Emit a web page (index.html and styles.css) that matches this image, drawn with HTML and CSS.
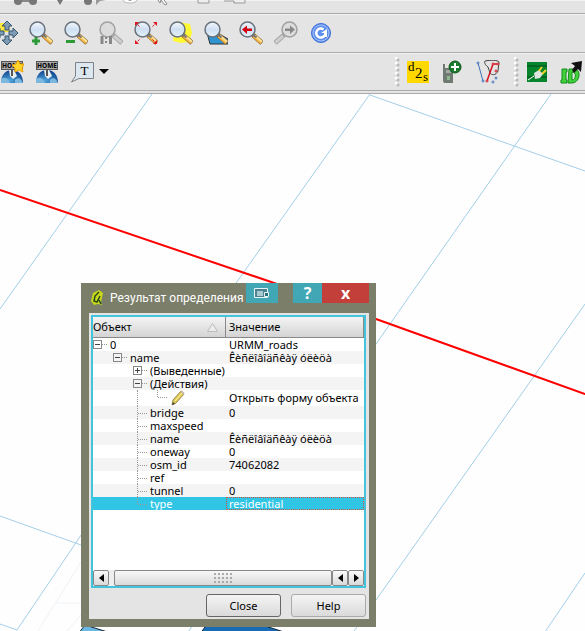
FILE: index.html
```
<!DOCTYPE html>
<html lang="ru">
<head>
<meta charset="utf-8">
<title>Результат определения</title>
<link rel="stylesheet" href="styles.css">
</head>
<body>
<svg class="defs" width="0" height="0" aria-hidden="true">
  <defs>
    <linearGradient id="handle" x1="0" y1="1" x2="1" y2="0">
      <stop offset="0.3" stop-color="#e79a1f"/>
      <stop offset="0.6" stop-color="#ffe9a0"/>
      <stop offset="1" stop-color="#d98a10"/>
    </linearGradient>
    <linearGradient id="glass" x1="0" y1="0" x2="0" y2="1">
      <stop offset="0" stop-color="#f4f8fc"/>
      <stop offset="0.5" stop-color="#cfe0f2"/>
      <stop offset="1" stop-color="#e6f2fb"/>
    </linearGradient>
    <radialGradient id="globe" cx="0.4" cy="0.8" r="0.8">
      <stop offset="0" stop-color="#4fa6dd"/>
      <stop offset="1" stop-color="#0b3c86"/>
    </radialGradient>
    <symbol id="lens" viewBox="0 0 24 24">
      <path d="M14 14l9 8" stroke="#8a6a3a" stroke-width="5"/>
      <path d="M15 15l7.500 6.500" stroke="url(#handle)" stroke-width="4"/>
      <path d="M14.500 14l3 2.500" stroke="#777" stroke-width="2"/>
      <circle cx="8.500" cy="8.500" r="7.500" fill="url(#glass)" stroke="#69717b" stroke-width="1.500"/>
    </symbol>
    <symbol id="lens-off" viewBox="0 0 24 24">
      <path d="M14 14l9 8" stroke="#a2a2a2" stroke-width="5"/>
      <path d="M15 15l7.500 6.500" stroke="#cecece" stroke-width="3"/>
      <circle cx="8.500" cy="8.500" r="7.500" fill="#dcdcdc" stroke="#a0a0a0" stroke-width="1.500"/>
    </symbol>
    <symbol id="home" viewBox="0 0 24 24">
      <path d="M1 23c0-9 5-13 11-13s11 4 11 13z" fill="url(#globe)"/>
      <path d="M9 10l5 0 3 6-4 3-3-3z" fill="#e9eef2"/>
      <path d="M1 19c4-3 8 0 9 4H1zM15 20c3-3 6-2 8 3h-8z" fill="#7cb7df"/>
      <path d="M12 8v8" stroke="#555" stroke-width="2"/>
      <rect x="1.500" y="1.500" width="21" height="8" fill="#a9a9a9" stroke="#555"/>
      <text x="12" y="8" font-size="6.500" font-weight="bold" text-anchor="middle">HOME</text>
    </symbol>
  </defs>
</svg>

<div class="app">
  <!-- верхняя панель, видна только нижняя часть -->
  <div class="toolbar toolbar-top">
    <svg width="250" height="12" viewBox="0 0 250 12">
      <path d="M17 0h16v2H17z" fill="#888"/>
      <circle cx="18" cy="1" r="4" fill="#777"/>
      <circle cx="33" cy="1" r="4" fill="#777"/>
      <path d="M57 0h6l-3 5z" fill="#777"/>
      <circle cx="88" cy="1" r="4" fill="#777"/>
      <path d="M96 0h10l-6 1-4 4z" fill="#999"/>
      <ellipse cx="130" cy="0" rx="7" ry="3" fill="#fff" stroke="#bbb"/>
      <circle cx="130" cy="-1" r="2" fill="#999"/>
      <path d="M158 0l2 3 1-3 4 5 2-1-3-4" fill="#fff" stroke="#888"/>
      <path d="M198 0v3h11V0M224 1h10v2h11V0" fill="#eee" stroke="#999"/>
    </svg>
  </div>

  <div class="toolbar">
    <button class="tool tool-first" aria-label="Прокрутка"><svg viewBox="0 0 24 24">
      <path d="M4 2h12l-1 9H4z" fill="#ffe83c"/>
      <path d="M13 0l5 5h-3v4h-4V5H8zM13 24l5-5h-3v-4h-4v4H8zM1 12l5-5v3h4v4H6v3zM24 12l-5-5v3h-4v4h4v3z" fill="#7e9cb5" stroke="#35556f"/>
    </svg></button>
    <button class="tool" aria-label="Увеличить"><svg viewBox="0 0 24 24">
      <use href="#lens"/><path d="M7 16v8M3 20h8" stroke="#2c9b37" stroke-width="3"/>
    </svg></button>
    <button class="tool" aria-label="Уменьшить"><svg viewBox="0 0 24 24">
      <use href="#lens"/><path d="M2 20.500h9" stroke="#2c9b37" stroke-width="3"/>
    </svg></button>
    <button class="tool" aria-label="Фактический размер" disabled><svg viewBox="0 0 24 24">
      <use href="#lens-off"/><path d="M3 15v8M11.500 15v8" stroke="#888" stroke-width="3"/><path d="M7 16v2M7 20v2" stroke="#888" stroke-width="2"/>
    </svg></button>
    <button class="tool" aria-label="Полный охват"><svg viewBox="0 0 24 24">
      <use href="#lens"/><path d="M1 1h4L1 5zM23 1h-4l4 4zM1 23h4l-4-4zM23 23h-4l4-4z" fill="#e0141e"/><path d="M2 2l4 4M22 2l-4 4M2 22l4-4M22 22l-4-4" stroke="#e0141e" stroke-dasharray="2 1"/>
    </svg></button>
    <button class="tool" aria-label="Увеличить до выделения"><svg viewBox="0 0 24 24">
      <path d="M10 1l11 2 2 9-3 9-8 1-8-2 1-8z" fill="#fff836"/><use href="#lens"/>
    </svg></button>
    <button class="tool" aria-label="Увеличить до слоя"><svg viewBox="0 0 24 24">
      <path d="M2 8l4 15h18v-5L12 11z" fill="#2e94d2" stroke="#333"/><use href="#lens"/>
    </svg></button>
    <button class="tool" aria-label="Предыдущий охват"><svg viewBox="0 0 24 24">
      <use href="#lens"/><path d="M3 8.500l5-4v3h5v2.500H8v3z" fill="#d3000b"/>
    </svg></button>
    <button class="tool" aria-label="Следующий охват" disabled><svg viewBox="0 0 24 24">
      <g transform="translate(24 0) scale(-1 1)"><use href="#lens-off"/></g><path d="M21 8.500l-5-4v3h-5v2.500h5v3z" fill="#888"/>
    </svg></button>
    <button class="tool" aria-label="Обновить"><svg viewBox="0 0 24 24">
      <circle cx="12" cy="12" r="9.500" fill="#5f90ee" stroke="#3c6bd4"/>
      <circle cx="12" cy="12" r="8" fill="none" stroke="#a6c2fa"/>
      <path d="M14.500 8.500a4.500 4.500 0 1 0 1 6" fill="none" stroke="#fff" stroke-width="2.500"/><path d="M12 12l6-4v8h-3v-4z" fill="#fff"/>
    </svg></button>
  </div>

  <div class="toolbar toolbar-last">
    <button class="tool" aria-label="Новая закладка"><svg viewBox="0 0 24 24">
      <use href="#home"/><path d="M18 0l2 4 4 0-2 4 1 4-4-2-4 2 0-4-3-3 4-1z" fill="#ffd42a" stroke="#f0a000"/>
    </svg></button>
    <button class="tool" aria-label="Закладки"><svg viewBox="0 0 24 24"><use href="#home"/></svg></button>
    <button class="tool" aria-label="Аннотация"><svg viewBox="0 0 24 24">
      <path d="M5.500 2.500h18v16H9L1.500 22l4-6z" fill="#dce7f0" stroke="#7c8287"/>
      <text class="serif" x="14.500" y="15" font-size="13" text-anchor="middle">T</text>
    </svg></button>
    <button class="tool tool-arrow" aria-label="Ещё"><svg viewBox="0 0 10 24"><path d="M0 9h10l-5 5z"/></svg></button>

    <div class="plugins">
      <span class="grip"></span>
      <button class="tool" aria-label="d2s"><svg viewBox="0 0 24 24">
        <path d="M1 1h22v22H1z" fill="#ffd800"/>
        <text class="serif" x="2" y="11" font-size="13">d</text><text class="serif" x="9" y="18" font-size="15">2</text><text class="serif" x="17" y="21" font-size="13">s</text>
      </svg></button>
      <button class="tool" aria-label="GPS"><svg viewBox="0 0 24 24">
        <path d="M2 4h2v4h8v15H3L2 21z" fill="#6f7b72"/>
        <path d="M5 10h5v3H5z" fill="#a3ada3"/><path d="M6 16h3v4H6z" fill="#8fb88f"/>
        <circle cx="14" cy="7" r="6" fill="#187a2c" stroke="#105a1f"/>
        <path d="M14 3v8M10 7h8" stroke="#fff" stroke-width="2"/>
      </svg></button>
      <button class="tool" aria-label="Оцифровка"><svg viewBox="0 0 24 24" fill="none">
        <path d="M9 1c5-1 13-1 14 1l-1 9c-2 5-7 4-8 2l-2-6C9 5 8 2 9 1z" stroke="#444"/>
        <path d="M2 3l5 18" stroke="#3b70b8"/><path d="M11 21l6-17h5" stroke="#d31420" stroke-width="1.500"/>
        <g fill="#fff" stroke="#3b70b8"><circle cx="2" cy="3" r="1"/><circle cx="7" cy="21" r="1"/><circle cx="20" cy="18" r="1"/><circle cx="17" cy="22" r="1"/></g>
        <g fill="#fff" stroke="#d31420"><circle cx="11" cy="21" r="1"/><circle cx="17" cy="4" r="1"/><circle cx="22" cy="4" r="1"/><circle cx="20" cy="11" r="1"/></g>
      </svg></button>
      <span class="grip"></span>
      <button class="tool" aria-label="Соединение"><svg viewBox="0 0 24 24">
        <path d="M2 2h20v20H2z" fill="#07852c"/><path d="M2 6h20M2 17h20" stroke="#02481a"/>
        <path d="M3 20l6-4" stroke="#fff"/><path d="M9 13l5-3 4 4-3 4-5 1z" fill="#dfe5df"/>
        <path d="M14 11l3-4M17 14l4-4" stroke="#f3d22c" stroke-width="2"/>
      </svg></button>
      <button class="tool" aria-label="ID"><svg viewBox="0 0 24 24">
        <path d="M2 9h5v3H6v8h1v3H1v-3h1zM9 9h5c8 0 6 14-2 14H8zM12 12v8c4 0 5-8 0-8z" fill="#42d13a" stroke="#138a1b" fill-rule="evenodd"/>
        <path d="M11 3l11-2-1 11-3-3-4 4-2-3 3-4z" fill="#111"/>
      </svg></button>
    </div>
  </div>

  <div class="map">
    <svg class="roads" width="1600" height="900" viewBox="0 94 1600 900" fill="none">
      <g stroke="#a3cfe8">
        <path d="M152 94L0 309M370 94L200 334M370 95L1600 530M551 94L376 344M585 304L340 651M585 573L530 654M0 516l81 29M100 507L17 630 0 624M210 600l-30 44"/>
      </g>
      <path d="M81 562L38 631M56 603h25M81 615L67 631" stroke="#edf2f6"/>
      <path d="M78 634l7-9 29 9z" fill="#6cb8e4" stroke="#123"/>
      <path d="M200 634l10-14 40 1 40 13z" fill="#1a6bb5" stroke="#123"/>
      <path d="M0 190L280 285 376 319 585 394 1600 758" stroke="#f00" stroke-width="2"/>
    </svg>

    <div class="dialog" role="dialog" aria-labelledby="title">
      <div class="titlebar">
        <svg class="logo" width="14" height="16" viewBox="0 0 14 16"><path d="M3 3l6-3 4 3-2 9 1 3-4-1-4 1-3-4z" fill="#c9d819"/><path d="M9 2L5 6l-1 5 3 1 3-6M9 10l2 4" fill="none" stroke="#24491b" stroke-width="1.500"/></svg>
        <h1 id="title">Результат определения</h1>
        <div class="controls">
          <button class="ctl ctl-dock" aria-label="Закрепить"><svg width="16" height="11" viewBox="0 0 16 11"><path d="M.5 .5h13v9H.5z" fill="#4d8290" stroke="#e8f4f6"/><path d="M3 3h6v5H3z" fill="#a7c9cf"/><path d="M10.500 4.500h4v4h-4z" fill="#286d7a" stroke="#e8f4f6"/></svg></button>
          <button class="ctl ctl-help">?</button>
          <button class="ctl ctl-close">x</button>
        </div>
      </div>

      <div class="content">
        <div class="tree-box">
          <table class="tree">
            <thead>
              <tr>
                <th><div class="head">Объект<svg width="11" height="9" viewBox="0 0 11 9"><path d="M.5 8.500h10l-5-8z" fill="#ececec" stroke="#bbb"/></svg></div></th>
                <th>Значение</th>
              </tr>
            </thead>
            <tbody>
              <tr><td><div class="node level-0"><i class="box"></i>0</div></td><td>URMM_roads</td></tr>
              <tr><td><div class="node level-1"><i class="box"></i>name</div></td><td>Êèñëîâîäñêàÿ óëèöà</td></tr>
              <tr><td><div class="node level-2"><i class="box plus"></i>(Выведенные)</div></td><td></td></tr>
              <tr><td><div class="node level-2"><i class="box"></i>(Действия)</div></td><td></td></tr>
              <tr class="action"><td><div class="node level-2"><i class="pipe"></i><i class="leaf last"></i><svg width="16" height="16" viewBox="0 0 16 16"><path d="M2 15l1-5 8-9 3 3-8 9z" fill="#e2cc55" stroke="#9a8a48"/><path d="M2 15l1-3 2 2z" fill="#444"/><path d="M11 1l3 3" stroke="#c7b5a7" stroke-width="2"/><path d="M5 11l7-8" stroke="#fbf1a5"/></svg></div></td><td>Открыть форму объекта</td></tr>
              <tr><td><div class="node level-2"><i class="leaf"></i>bridge</div></td><td>0</td></tr>
              <tr><td><div class="node level-2"><i class="leaf"></i>maxspeed</div></td><td></td></tr>
              <tr><td><div class="node level-2"><i class="leaf"></i>name</div></td><td>Êèñëîâîäñêàÿ óëèöà</td></tr>
              <tr><td><div class="node level-2"><i class="leaf"></i>oneway</div></td><td>0</td></tr>
              <tr><td><div class="node level-2"><i class="leaf"></i>osm_id</div></td><td>74062082</td></tr>
              <tr><td><div class="node level-2"><i class="leaf"></i>ref</div></td><td></td></tr>
              <tr><td><div class="node level-2"><i class="leaf"></i>tunnel</div></td><td>0</td></tr>
              <tr class="selected"><td><div class="node level-2"><i class="leaf last"></i>type</div></td><td>residential</td></tr>
            </tbody>
          </table>
          <div class="scrollbar">
            <button class="arrow" aria-label="Влево"><svg width="5" height="8" viewBox="0 0 5 8"><path d="M5 0v8L0 4z"/></svg></button>
            <div class="track"><div class="thumb"><span class="dots"></span></div></div>
            <button class="arrow" aria-label="Влево"><svg width="5" height="8" viewBox="0 0 5 8"><path d="M5 0v8L0 4z"/></svg></button>
            <button class="arrow" aria-label="Вправо"><svg width="5" height="8" viewBox="0 0 5 8"><path d="M0 0v8l5-4z"/></svg></button>
          </div>
        </div>
        <div class="buttons">
          <button class="btn btn-default">Close</button>
          <button class="btn">Help</button>
        </div>
      </div>
    </div>
  </div>
</div>
</body>
</html>
```
FILE: styles.css
```
* {
  box-sizing: border-box;
}

body {
  margin: 0;
  font-family: "Noto Sans", "Open Sans", sans-serif;
  font-size: 11px;
  color: #000;
  overflow: hidden;
}

button {
  font-family: inherit;
  font-size: 11px;
  padding: 0;
  border: none;
  background: none;
}

svg {
  display: block;
  flex: none;
}

.defs {
  position: absolute;
}

.serif {
  font-family: "Liberation Serif", serif;
}

.app {
  display: flex;
  flex-direction: column;
  height: 100vh;
}

/* панели инструментов */
.toolbar {
  display: flex;
  align-items: center;
  gap: 11px;
  height: 39px;
  flex: none;
  background: #e4e4e4;
  border-bottom: 1px solid #aaa;
  box-shadow: inset 0 1px #f2f2f2;
}

.toolbar-top {
  height: 14px;
  align-items: flex-start;
}

.toolbar-last {
  height: 41px;
  padding-right: 1px;
  border-bottom: 4px double #aaa;
}

.tool {
  width: 24px;
  height: 24px;
  flex: none;
}

.tool svg {
  width: 100%;
  height: 100%;
}

.tool-first {
  margin-left: -6px;
}

.tool-arrow {
  width: 10px;
  margin-left: -6px;
}

.plugins {
  display: flex;
  align-items: center;
  gap: 11px;
  margin-left: auto;
}

.grip {
  width: 5px;
  height: 30px;
  margin: 0 -5px 0 3px;
  background:
    radial-gradient(circle at 1px 1px, #fff 1px, transparent 2px) 0 0 / 5px 5px,
    radial-gradient(circle at 3px 3px, #bbb 1px, transparent 2px) 0 0 / 5px 5px;
}

/* карта */
.map {
  position: relative;
  flex: 1;
  overflow: hidden;
  background: #fefefe;
}

.roads {
  position: absolute;
  top: 0;
  left: 0;
}

/* окно */
.dialog {
  position: absolute;
  left: 81px;
  top: 189px;
  width: 295px;
  padding: 0 7px 8px 8px;
  background: #7b7e69;
}

.titlebar {
  display: flex;
  align-items: center;
  height: 30px;
  padding-left: 1px;
}

.titlebar h1 {
  margin: 0 0 0 6px;
  font-family: Roboto, "Noto Sans", sans-serif;
  font-size: 12px;
  font-weight: normal;
  color: #fff;
  white-space: nowrap;
}

.controls {
  display: flex;
  align-self: flex-start;
  margin-left: auto;
}

.ctl {
  display: flex;
  justify-content: center;
  align-items: center;
  height: 20px;
  color: #fff;
  font-size: 16px;
  font-weight: bold;
  line-height: 20px;
  background: #41a7b4;
}

.ctl-dock {
  width: 32px;
  margin-right: 15px;
}

.ctl-help {
  width: 29px;
}

.ctl-close {
  width: 47px;
  background: #c24039;
}

.content {
  padding: 2px 3px 2px 2px;
  background: #e4e4e4;
}

.tree-box {
  display: flex;
  flex-direction: column;
  height: 273px;
  border: 2px solid #42c4dc;
  background: #fff;
}

.tree {
  width: 100%;
  table-layout: fixed;
  border-collapse: separate;
  border-spacing: 0;
}

.tree th {
  height: 21px;
  padding: 0 0 0 3px;
  font-size: 11px;
  font-weight: normal;
  line-height: 18px;
  text-align: left;
  background: linear-gradient(#f4f4f4, #d4d4d4);
  border-right: 1px solid #888;
  border-bottom: 1px solid #888;
}

.tree th:first-child {
  width: 133px;
  padding-left: 0;
}

.head {
  display: flex;
  align-items: center;
  justify-content: space-between;
  padding-right: 7px;
}

.tree td {
  height: 13px;
  padding: 0 0 0 3px;
  line-height: 13px;
  white-space: nowrap;
}

.tree td:first-child {
  padding: 0;
}

.tree tbody tr:nth-child(even) {
  background: #f4f4f4;
}

.node {
  display: flex;
  align-items: center;
  height: 13px;
}

.level-1 {
  padding-left: 20px;
}

.level-2 {
  padding-left: 40px;
}

.tree .action td,
.action .node {
  height: 16px;
}

.tree .action td {
  line-height: 16px;
}

/* значки раскрытия и линии дерева */
.box {
  width: 9px;
  height: 9px;
  margin-right: 8px;
  border: 1px solid #888;
  background: linear-gradient(#444, #444) center / 5px 1px no-repeat;
}

.box::after {
  content: "";
  display: block;
  width: 5px;
  margin: 3px 0 0 8px;
  border-top: 1px dotted #999;
}

.box.plus {
  background: linear-gradient(#444, #444) center / 5px 1px no-repeat, linear-gradient(#444, #444) center / 1px 5px no-repeat;
}

.leaf,
.pipe {
  align-self: stretch;
  width: 13px;
  margin-left: 4px;
  border-left: 1px dotted #999;
}

.pipe {
  width: 16px;
}

.leaf::before {
  content: "";
  display: block;
  width: 9px;
  height: 7px;
  border-bottom: 1px dotted #999;
}

.leaf.last {
  height: 7px;
  align-self: flex-start;
}

.tree tbody .selected {
  color: #fff;
  background: #30c5e5;
}

.selected td:last-child {
  outline: 1px dotted #d0523c;
  outline-offset: -1px;
}

/* полоса прокрутки */
.scrollbar {
  display: flex;
  height: 16px;
  margin-top: auto;
}

.arrow {
  display: flex;
  justify-content: center;
  align-items: center;
  width: 16px;
  border: 1px solid #888;
  border-radius: 2px;
  background: linear-gradient(#fafafa, #dadada);
}

.track {
  flex: 1;
  padding-left: 5px;
  background: #eee;
}

.thumb {
  display: flex;
  justify-content: center;
  align-items: center;
  height: 16px;
  border: 1px solid #888;
  border-radius: 2px;
  background: linear-gradient(#f8f8f8, #dadada);
}

.dots {
  width: 20px;
  height: 12px;
  background: radial-gradient(circle, #aaa 1px, transparent 1px) 0 0 / 4px 4px;
}

.buttons {
  display: flex;
  justify-content: flex-end;
  gap: 10px;
  padding-top: 6px;
}

.btn {
  width: 75px;
  height: 23px;
  border: 1px solid #aaa;
  border-radius: 3px;
  background: linear-gradient(#f4f4f4, #dadada);
}

.btn-default {
  border-color: #666;
}
```
